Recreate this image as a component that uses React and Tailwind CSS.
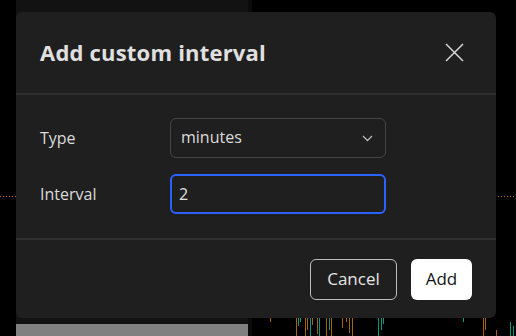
import React from 'react';

const bars = [
  // [x, y1, y2, color]
  [270, 318, 322, 'o'], [296, 318, 336, 'o'], [298, 318, 326, 't'], [300, 318, 322, 't'],
  [305, 318, 336, 'o'], [307, 318, 330, 'o'], [310, 318, 336, 't'], [312, 318, 325, 'o'],
  [317, 318, 334, 'o'], [319, 318, 336, 't'], [326, 318, 336, 'o'], [329, 318, 330, 't'],
  [331, 318, 336, 'o'], [342, 318, 328, 'o'], [346, 318, 322, 'o'], [349, 318, 333, 'o'],
  [352, 318, 336, 'o'], [378, 318, 336, 't'], [381, 318, 330, 't'], [383, 318, 324, 't'],
  [463, 318, 322, 't'], [483, 318, 336, 'o'], [485, 318, 330, 'o'], [496, 330, 336, 'o'],
  [510, 322, 336, 't'], [513, 326, 336, 't'],
];

function Chevron() {
  return (
    <svg width="11" height="7" viewBox="0 0 11 7" fill="none">
      <path d="M1 1l4.5 4.5L10 1" stroke="#b8b8b8" strokeWidth="1.3" />
    </svg>
  );
}

function CloseIcon() {
  return (
    <svg width="19" height="19" viewBox="0 0 19 19" fill="none">
      <path d="M1 1l17 17M18 1L1 18" stroke="#d6d6d6" strokeWidth="1.5" />
    </svg>
  );
}

export default function App() {
  return (
    <div className="relative w-[516px] h-[336px] bg-black overflow-hidden font-['Open_Sans',sans-serif]">
      {/* Background chart layout */}
      <div className="flex h-full">
        <div className="w-[16px]" />
        <div className="w-[232px] flex flex-col bg-[#121212]">
          <div className="flex-1" />
          <div className="h-[12px] bg-[#808080]" />
        </div>
        <div className="w-[4px] bg-[#0b0b0b]" />
        <div className="flex-1" />
      </div>

      <svg className="absolute inset-0" width="516" height="336">
        <line x1="0" y1="196.5" x2="516" y2="196.5" stroke="#b8700f" strokeWidth="1" strokeDasharray="1 2" />
        {bars.map(([x, y1, y2, c], i) => (
          <line key={i} x1={x + 0.5} y1={y1} x2={x + 0.5} y2={y2} stroke={c === 't' ? '#089981' : '#a8640c'} strokeWidth="1" />
        ))}
      </svg>

      {/* Dialog */}
      <div className="absolute left-[16px] top-[12px] w-[480px] h-[306px] rounded-md bg-[#1f1f1f] flex flex-col text-[#dbdbdb]">
        <div className="h-[81px] flex items-center justify-between pl-[24px] pr-[32px]">
          <h2 className="text-[22px] font-bold tracking-[0.2px] text-[#e0e0e0]">Add custom interval</h2>
          <CloseIcon />
        </div>
        <div className="h-[2px] bg-[#303030]" />

        <div className="flex flex-col gap-[16px] pt-[23px] pb-[24px] pl-[24px]">
          <div className="flex items-center">
            <span className="w-[130px] text-[16px]">Type</span>
            <div className="w-[216px] h-[40px] rounded-md border border-[#454545] flex items-center justify-between pl-[10px] pr-[12px]">
              <span className="text-[16px] text-[#dbdbdb] -mt-[3px]">minutes</span>
              <Chevron />
            </div>
          </div>
          <div className="flex items-center">
            <span className="w-[130px] text-[16px]">Interval</span>
            <div className="w-[216px] h-[40px] rounded-md border-2 border-[#2962ff] flex items-center pl-[7px]">
              <span className="text-[16px] text-[#e0e0e0]">2</span>
            </div>
          </div>
        </div>

        <div className="h-[2px] bg-[#303030]" />
        <div className="flex-1 flex items-center justify-end gap-[14px] pr-[24px]">
          <button className="h-[41px] w-[87px] rounded-md border border-[#bdbdbd] text-[17px] font-medium text-[#e6e6e6]">
            Cancel
          </button>
          <button className="h-[41px] w-[61px] rounded-md bg-white text-[17px] font-medium text-[#131313]">
            Add
          </button>
        </div>
      </div>
    </div>
  );
}
